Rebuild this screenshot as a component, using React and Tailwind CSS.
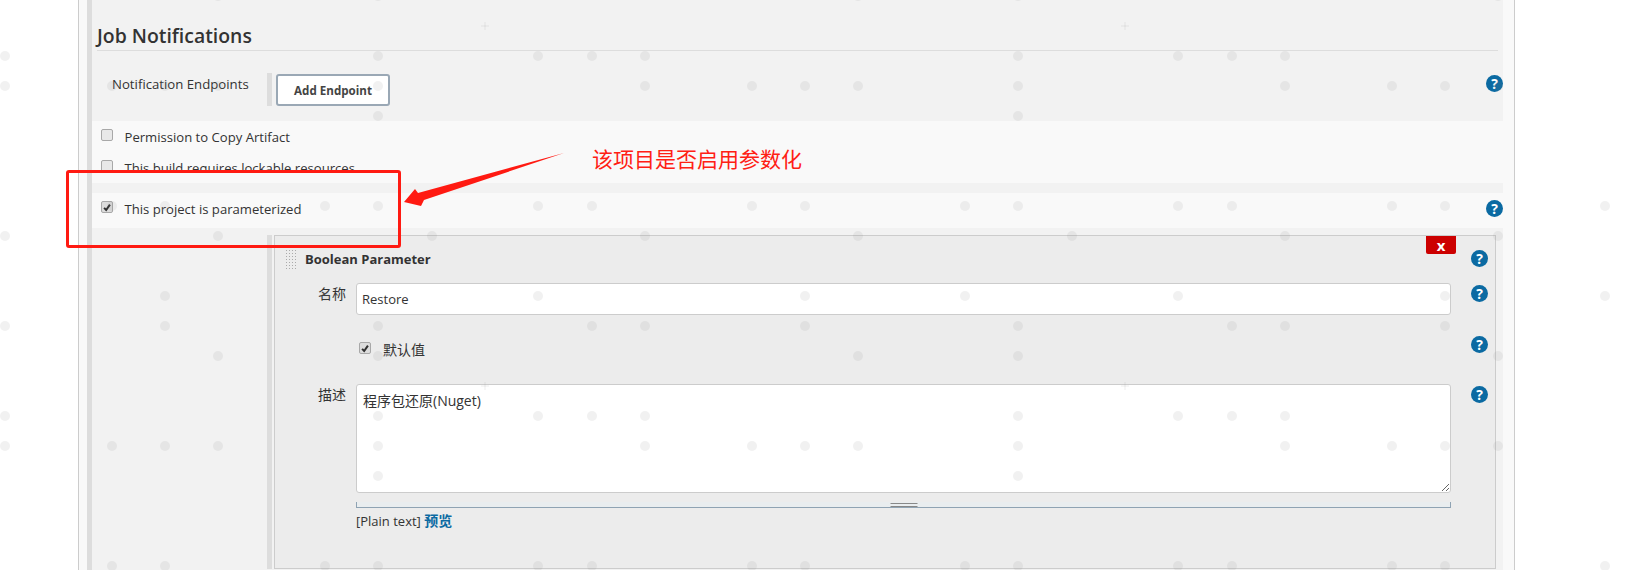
const font = { fontFamily: '"Open Sans", "Noto Sans CJK SC", sans-serif' };

function Help({ className = '' }) {
  return (
    <div className={`flex h-[17px] w-[17px] shrink-0 items-center justify-center rounded-full bg-[#0b6aa2] text-[14px] leading-none font-bold text-white ${className}`}>
      ?
    </div>
  );
}

function Check({ checked, className = '' }) {
  return (
    <span className={`flex h-[12px] w-[12px] shrink-0 items-center justify-center rounded-[2px] border border-[#a8a8a8] ${checked ? 'bg-[#dcdcdc]' : 'bg-[#e8e8e8]'} ${className}`}>
      {checked && (
        <svg viewBox="0 0 12 12" className="h-[11px] w-[11px]">
          <path d="M2.5 6.5 L5 9 L9.5 2.5" fill="none" stroke="#2f2f2f" strokeWidth="2.4" />
        </svg>
      )}
    </span>
  );
}

// watermark tile repeats every 640x360
const DOTS = [
  [5, 56], [378, 56], [538, 56], [592, 56],
  [5, 86], [112, 86], [165, 86], [218, 86], [378, 86],
  [378, 116],
  [112, 206], [165, 206], [325, 206], [378, 206], [538, 206], [592, 206],
  [5, 236], [218, 236], [432, 236],
  [165, 296], [325, 296], [538, 296],
  [5, 326], [165, 326], [378, 326], [592, 326],
  [218, 356], [378, 356], [218, -4], [378, -4],
];

function Watermark() {
  return (
    <svg className="pointer-events-none absolute inset-0 h-full w-full">
      <defs>
        <pattern id="wm" width="640" height="360" patternUnits="userSpaceOnUse">
          {DOTS.map(([x, y]) => (
            <circle key={`${x}-${y}`} cx={x} cy={y} r="5" fill="#808080" fillOpacity="0.11" />
          ))}
          <path d="M481 26h8M485 22v8" stroke="#808080" strokeOpacity="0.15" />
        </pattern>
      </defs>
      <rect width="100%" height="100%" fill="url(#wm)" />
    </svg>
  );
}

function Annotation() {
  return (
    <>
      <div className="absolute top-[170px] left-[66px] h-[78px] w-[335px] rounded-[3px] border-[3px] border-[#ff1a12]" />
      <svg className="pointer-events-none absolute inset-0 h-full w-full">
        <polygon points="404,202 415,189 418,193 564,153 424,200 421,206" fill="#ff1a12" />
      </svg>
      <div className="absolute top-[145px] left-[592px] text-[21px] leading-[28px] text-[#ff2014]">该项目是否启用参数化</div>
    </>
  );
}

function BooleanParameter() {
  return (
    <div className="relative h-[334px] flex-1 border border-[#ccc] bg-[#ececec]">
      <div className="absolute top-0 right-[39px] flex h-[18px] w-[30px] items-center justify-center rounded-b-[2px] bg-[#c00] text-[15px] leading-none font-bold text-white">
        x
      </div>

      {/* header */}
      <div className="flex h-[47px] items-start pr-[7px]">
        <div className="mt-[13px] ml-[10px] h-[20px] w-[12px] bg-[radial-gradient(#aaa_1px,transparent_1px)] bg-[length:3px_3px]" />
        <span className="mt-[13px] ml-[8px] text-[13px] leading-[20px] font-bold text-[#333]">Boolean Parameter</span>
        <Help className="mt-[14px] ml-auto" />
      </div>

      {/* name */}
      <div className="flex items-start pr-[7px]">
        <label className="mt-[1px] w-[71px] text-right text-[14px] leading-[20px] text-[#333]">名称</label>
        <input
          readOnly
          value="Restore"
          style={font}
          className="ml-[10px] h-[32px] w-[1095px] rounded-[3px] border border-[#ccc] bg-white px-[5px] text-[13px] text-[#333] outline-none"
        />
        <Help className="mt-[2px] ml-auto" />
      </div>

      {/* default value */}
      <div className="flex h-[69px] items-start pr-[7px]">
        <Check checked className="mt-[27px] ml-[84px]" />
        <span className="mt-[25px] ml-[12px] text-[14px] leading-[20px] text-[#333]">默认值</span>
        <Help className="mt-[21px] ml-auto" />
      </div>

      {/* description */}
      <div className="flex items-start pr-[7px]">
        <label className="mt-[1px] w-[71px] text-right text-[14px] leading-[20px] text-[#333]">描述</label>
        <div className="ml-[10px] w-[1095px]">
          <textarea
            readOnly
            defaultValue="程序包还原(Nuget)"
            style={font}
            className="block h-[109px] w-full rounded-[3px] border border-[#ccc] bg-white px-[6px] py-[6px] text-[14px] leading-[20px] text-[#333] outline-none"
          />
          <div className="relative mt-[9px] h-[6px] border-x border-b border-[#8fa3b3] bg-[#e9edef]">
            <div className="absolute top-[1px] left-1/2 h-[4px] w-[27px] -translate-x-1/2 border-y border-[#888]" />
          </div>
          <div className="mt-[3px] text-[13px] leading-[20px] text-[#333]">
            [Plain text] <span className="text-[14px] font-bold text-[#0b6aa2]">预览</span>
          </div>
        </div>
        <Help className="mt-[2px] ml-auto" />
      </div>
    </div>
  );
}

export default function App() {
  return (
    <div style={font} className="relative h-[570px] w-full overflow-hidden bg-white">
      <div className="ml-[78px] h-full w-[1437px] border-x border-[#ccc] bg-[#f9f9f9] pr-[11px] pl-[8px]">
        <div className="h-full border-l-[5px] border-[#ddd] bg-[#f2f2f2]">
          <div className="mr-[5px] ml-[5px] flex h-[51px] items-end border-b border-[#ddd]">
            <h2 className="mb-[1px] text-[19.4px] leading-[26px] font-semibold text-[#333]">Job Notifications</h2>
          </div>

          <div className="flex h-[70px] items-start">
            <span className="mt-[22px] ml-[20px] w-[155px] text-[13.2px] leading-[22px] text-[#333]">Notification Endpoints</span>
            <div className="mt-[22px] h-[33px] w-[5px] bg-[#ddd]" />
            <button className="mt-[23px] ml-[4px] h-[32px] w-[114px] rounded-[3px] border-2 border-[#9aa8b5] bg-white pt-[1px] text-[11.6px] font-bold text-[#444]">
              Add Endpoint
            </button>
            <Help className="mt-[24px] ml-auto" />
          </div>

          <div className="h-[62px] bg-[#f9f9f9] pl-[9px]">
            <div className="flex h-[31px] items-start">
              <Check className="mt-[8px]" />
              <span className="mt-[6px] ml-[11.5px] text-[13.1px] leading-[20px] text-[#333]">Permission to Copy Artifact</span>
            </div>
            <div className="flex h-[20px] items-start overflow-hidden">
              <Check className="mt-[8px]" />
              <span className="mt-[6px] ml-[11.5px] text-[13.1px] leading-[20px] text-[#333]">This build requires lockable resources</span>
            </div>
          </div>

          <div className="mt-[10px] flex h-[35px] items-start bg-[#f9f9f9] pl-[9px]">
            <Check checked className="mt-[8px]" />
            <span className="mt-[6px] ml-[11.5px] text-[13.1px] leading-[20px] text-[#333]">This project is parameterized</span>
            <Help className="mt-[7px] ml-auto" />
          </div>

          <div className="mt-[7px] mr-[7px] ml-[175px] flex border-l-[5px] border-[#ddd] pl-[2px]">
            <BooleanParameter />
          </div>
        </div>
      </div>
      <Watermark />
      <Annotation />
    </div>
  );
}
